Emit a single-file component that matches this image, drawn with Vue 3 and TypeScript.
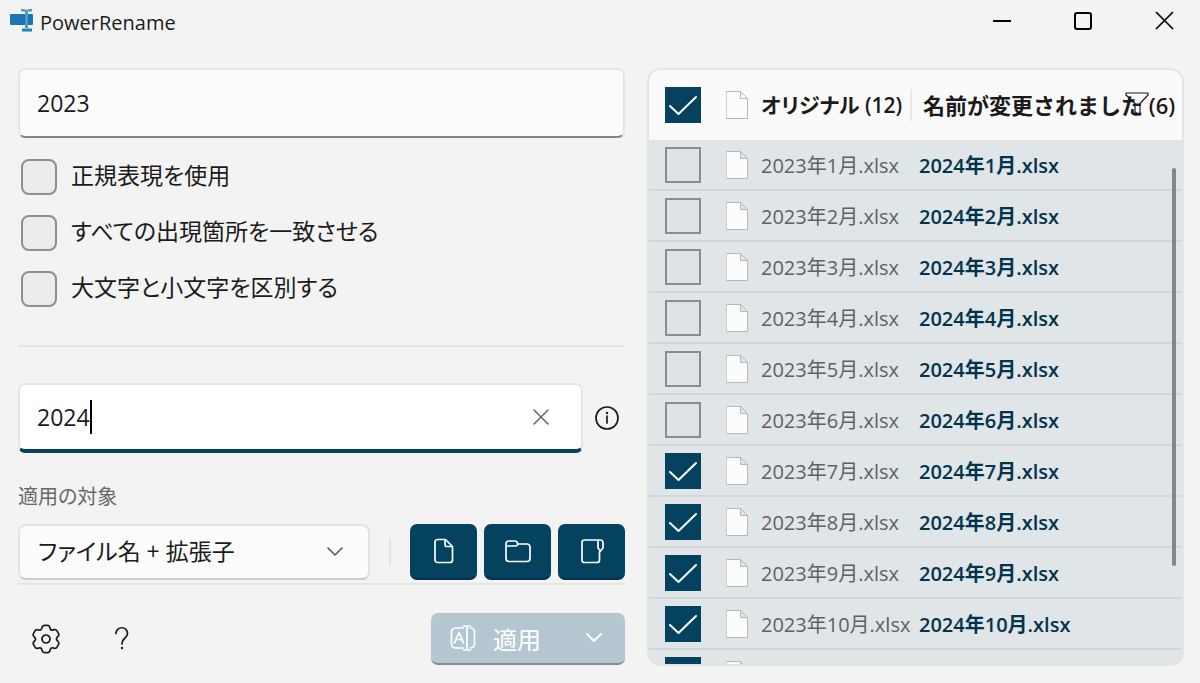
<script setup lang="ts">
import { computed, reactive, ref } from 'vue'

interface FileRow {
  month: number
  checked: boolean
}

const search = ref('2023')
const replace = ref('2024')
const scope = ref('name-ext')
const allChecked = ref(true)

const options = reactive([
  { id: 'regex', label: '正規表現を使用', on: false },
  { id: 'all', label: 'すべての出現箇所を一致させる', on: false },
  { id: 'case', label: '大文字と小文字を区別する', on: false },
])

const rows = reactive<FileRow[]>(
  Array.from({ length: 11 }, (_, i) => ({ month: i + 1, checked: i >= 6 })),
)

const replaceWidth = computed(() => ({ width: `${Math.max(replace.value.length, 1)}ch` }))

// Six-toothed gear outline with rounded corners, centred on the origin.
const gearPath = (() => {
  const base: [number, number][] = [[-3.2, -13.6], [3.2, -13.6], [4.8, -8.6]]
  const pts: [number, number][] = []
  for (let k = 0; k < 6; k++) {
    const a = (k * Math.PI) / 3
    for (const [x, y] of base) {
      pts.push([x * Math.cos(a) - y * Math.sin(a), x * Math.sin(a) + y * Math.cos(a)])
    }
  }
  const n = pts.length
  const toward = (p: [number, number], q: [number, number], d: number) => {
    const len = Math.hypot(q[0] - p[0], q[1] - p[1])
    return `${(p[0] + ((q[0] - p[0]) * d) / len).toFixed(2)} ${(p[1] + ((q[1] - p[1]) * d) / len).toFixed(2)}`
  }
  return (
    pts
      .map((p, i) => {
        const before = toward(p, pts[(i + n - 1) % n], 1.6)
        const after = toward(p, pts[(i + 1) % n], 1.6)
        return `${i ? 'L' : 'M'}${before}Q${p[0].toFixed(2)} ${p[1].toFixed(2)} ${after}`
      })
      .join('') + 'Z'
  )
})()
</script>

<template>
  <div class="window">
    <header class="titlebar">
      <svg class="app-icon" width="24" height="24" viewBox="0 0 24 24" aria-hidden="true">
        <rect x="0" y="6" width="23" height="11" rx="1" fill="#1b76b3" />
        <path d="M11 1h3l2.500 1 2.500-1h3v2.500h-4v16.500h-3V3.500h-4z" fill="#4f9cc3" />
        <path d="M12 20.500h10v3H12z" fill="#1f86b8" />
      </svg>
      <h1>PowerRename</h1>
      <div class="window-buttons">
        <button type="button" aria-label="最小化">
          <svg width="20" height="20" viewBox="0 0 20 20"><path d="M1 10h18" /></svg>
        </button>
        <button type="button" aria-label="最大化">
          <svg width="20" height="20" viewBox="0 0 20 20"><rect x="2" y="2" width="16" height="16" rx="2" /></svg>
        </button>
        <button type="button" aria-label="閉じる">
          <svg width="20" height="20" viewBox="0 0 20 20"><path class="thin" d="M2 1l17 17M19 1L2 18" /></svg>
        </button>
      </div>
    </header>

    <main class="content">
      <section class="settings">
        <input v-model="search" class="field search" type="text" aria-label="検索" />

        <div class="options">
          <label v-for="o in options" :key="o.id" class="option">
            <input v-model="o.on" type="checkbox" class="soft-box" />
            <span>{{ o.label }}</span>
          </label>
        </div>

        <hr />

        <div class="replace-row">
          <div class="field active">
            <input v-model="replace" class="replace" type="text" aria-label="置換" :style="replaceWidth" />
            <span class="caret"></span>
            <button class="clear" type="button" aria-label="クリア">
              <svg width="16" height="16" viewBox="0 0 16 16"><path d="M1 1l14 14M15 1L1 15" /></svg>
            </button>
          </div>
          <button class="info" type="button" aria-label="情報">
            <svg width="26" height="26" viewBox="0 0 26 26">
              <circle cx="13" cy="13" r="11" />
              <path d="M13 11v7" />
              <circle class="dot" cx="13" cy="8" r="1.200" />
            </svg>
          </button>
        </div>

        <label class="scope-label" for="scope">適用の対象</label>
        <div class="scope-row">
          <div class="select-wrap">
            <select id="scope" v-model="scope">
              <option value="name-ext">ファイル名 + 拡張子</option>
            </select>
            <svg class="chevron" width="16" height="10" viewBox="0 0 16 10"><path d="M1 1l7 7 7-7" /></svg>
          </div>
          <span class="v-rule"></span>
          <div class="toggles">
            <button type="button" aria-label="ファイルを含める">
              <svg width="28" height="28" viewBox="0 0 28 28">
                <path d="M7.500 2.500h8l7 7V23a2.500 2.500 0 0 1-2.500 2.500H7.500A2.500 2.500 0 0 1 5 23V5a2.500 2.500 0 0 1 2.500-2.500M15 2.500V7.500a2 2 0 0 0 2 2h5.500" />
              </svg>
            </button>
            <button type="button" aria-label="フォルダーを含める">
              <svg width="28" height="28" viewBox="0 0 28 28">
                <path d="M2 8V21.500a3 3 0 0 0 3 3H23a3 3 0 0 0 3-3V10a3 3 0 0 0-3-3H14L12.500 4.500Q12 4 11 4H4.500A2.500 2.500 0 0 0 2 6.500V9H11.500Q12.500 9 13 8.500L14 7" />
              </svg>
            </button>
            <button type="button" aria-label="サブフォルダーを含める">
              <svg width="28" height="28" viewBox="0 0 28 28">
                <path d="M20 3H6.500A2.500 2.500 0 0 0 4 5.500V23a2.500 2.500 0 0 0 2.500 2.500H19a2.500 2.500 0 0 0 2.500-2.500V14.500M22.500 3H20V11l2.500 3 2.500-3V5.500A2.500 2.500 0 0 0 22.500 3z" />
              </svg>
            </button>
          </div>
        </div>

        <footer class="footer">
          <button class="icon-button" type="button" aria-label="設定">
            <svg width="32" height="32" viewBox="-16 -16 32 32">
              <path :d="gearPath" />
              <circle r="4" />
            </svg>
          </button>
          <button class="icon-button" type="button" aria-label="ヘルプ">
            <svg width="32" height="32" viewBox="0 0 32 32">
              <path d="M10 10.500a5.700 5.700 0 0 1 11.500 0c0 4.500-5.500 5-5.500 9.500v1" />
              <circle class="dot" cx="16" cy="25" r="1.200" />
            </svg>
          </button>
          <div class="apply">
            <button class="apply-main" type="button">
              <svg width="28" height="28" viewBox="0 0 28 28">
                <path d="M14 4H6.500A4 4 0 0 0 2.500 8V20A4 4 0 0 0 6.500 24H14M21.500 4A4 4 0 0 1 25.500 8V20A4 4 0 0 1 21.500 24" />
                <path d="M5.500 19L10 8.500 14.500 19M7.500 15.500h5M18 2V26M14.500 2h7M14.500 26h7" />
              </svg>
              <span>適用</span>
            </button>
            <button class="apply-more" type="button" aria-label="その他">
              <svg width="16" height="10" viewBox="0 0 16 10"><path d="M1 1l7 7 7-7" /></svg>
            </button>
          </div>
        </footer>
      </section>

      <section class="panel">
        <table>
          <colgroup>
            <col class="c-check" />
            <col class="c-icon" />
            <col class="c-name" />
            <col />
          </colgroup>
          <thead>
            <tr>
              <th>
                <label class="tick">
                  <input v-model="allChecked" type="checkbox" aria-label="すべて選択" />
                  <svg v-if="allChecked" width="36" height="36" viewBox="0 0 36 36"><path d="M5 19l8.500 8L31 10" /></svg>
                </label>
              </th>
              <th>
                <svg class="doc" width="22" height="28" viewBox="0 0 22 28">
                  <path d="M.5.5H14.500L21.500 7.500V27.500H.5zM14.500.5V7.500H21.500" />
                </svg>
              </th>
              <th class="original"><span>オリジナル (12)</span></th>
              <th class="renamed">名前が変更されました (6)</th>
            </tr>
          </thead>
          <tbody>
            <tr v-for="r in rows" :key="r.month">
              <td>
                <label class="tick">
                  <input v-model="r.checked" type="checkbox" :aria-label="`2023年${r.month}月.xlsx`" />
                  <svg v-if="r.checked" width="36" height="36" viewBox="0 0 36 36"><path d="M5 19l8.500 8L31 10" /></svg>
                </label>
              </td>
              <td>
                <svg class="doc" width="22" height="28" viewBox="0 0 22 28">
                  <path d="M.5.5H14.500L21.500 7.500V27.500H.5zM14.500.5V7.500H21.500" />
                </svg>
              </td>
              <td class="original">2023年{{ r.month }}月.xlsx</td>
              <td class="renamed">2024年{{ r.month }}月.xlsx</td>
            </tr>
          </tbody>
        </table>
        <button class="filter" type="button" aria-label="フィルター">
          <svg width="24" height="24" viewBox="0 0 24 24"><path d="M1 1H23V3L15 11.500V23L10 20V11.500L1 3z" /></svg>
        </button>
        <span class="scrollbar"></span>
      </section>
    </main>
  </div>
</template>

<style>
body {
  margin: 0;
  background: #f3f3f3;
}
</style>

<style scoped>
.window {
  display: flex;
  flex-direction: column;
  box-sizing: border-box;
  height: 100vh;
  overflow: hidden;
  background: #f3f3f3;
  color: #1b1b1b;
  font-family: "Open Sans", "Noto Sans CJK JP", sans-serif;
  font-size: 23px;
  font-feature-settings: "palt";
}
.window * {
  box-sizing: border-box;
}
button,
input,
select {
  margin: 0;
  padding: 0;
  border: 0;
  background: none;
  color: inherit;
  font: inherit;
  font-feature-settings: inherit;
  outline: none;
}
button {
  display: grid;
  place-items: center;
}
svg {
  display: block;
  fill: none;
  stroke: currentColor;
  stroke-width: 2;
  stroke-linecap: round;
  stroke-linejoin: round;
}
svg .dot {
  fill: currentColor;
  stroke: none;
}

.titlebar {
  display: flex;
  align-items: center;
  flex: none;
  height: 44px;
  padding-left: 10px;
}
.app-icon {
  stroke: none;
  margin-bottom: 4px;
}
.titlebar h1 {
  margin: 0 auto 0 6px;
  padding-top: 2px;
  font-size: 20px;
  font-weight: 400;
  line-height: 28px;
}
.window-buttons {
  display: flex;
  gap: 9px;
  color: #000;
}
.window-buttons button {
  width: 72px;
  height: 44px;
  padding-bottom: 2px;
}
.window-buttons svg {
  stroke-linecap: butt;
}
.window-buttons .thin {
  stroke-width: 1.700;
}

.content {
  display: grid;
  grid-template-columns: minmax(0, 607fr) minmax(0, 537fr);
  gap: 22px;
  flex: 1;
  min-height: 0;
  padding: 24px 16px 17px 18px;
}
.settings {
  display: flex;
  flex-direction: column;
  min-height: 0;
}
.field {
  width: 100%;
  height: 70px;
  padding: 0 17px;
  border: 2px solid #e5e5e5;
  border-bottom: 2px solid #868686;
  border-radius: 7px;
  background: #fbfbfb;
}
.options {
  display: flex;
  flex-direction: column;
  gap: 20px;
  padding: 21px 3px 0;
}
.option {
  display: flex;
  align-items: center;
  gap: 14px;
  height: 36px;
  line-height: 32px;
}
.option span {
  padding-bottom: 4px;
}
.soft-box {
  appearance: none;
  width: 36px;
  height: 36px;
  border: 2px solid #8e9090;
  border-radius: 8px;
  background: #ececec;
}
hr {
  width: 100%;
  height: 2px;
  margin: 38px 0 36px;
  border: 0;
  background: #e5e5e5;
}
.replace-row {
  display: flex;
  align-items: center;
  gap: 11px;
}
.field.active {
  display: flex;
  align-items: center;
  flex: 1;
  border-bottom: 4px solid #04425f;
  background: #fff;
}
.replace {
  max-width: 85%;
  caret-color: transparent;
}
.caret {
  width: 2px;
  height: 34px;
  background: #000;
}
.clear {
  width: 32px;
  height: 32px;
  margin: 0 7px 0 auto;
  color: #666;
}
.clear svg,
.chevron {
  stroke-width: 1.500;
}
.info {
  width: 26px;
  margin-right: 5px;
}
.info svg {
  stroke-width: 1.700;
}
.scope-label {
  margin-top: 29px;
  color: #686868;
  font-size: 20px;
  line-height: 30px;
}
.scope-row {
  display: flex;
  align-items: center;
  margin-top: 12px;
  padding-bottom: 3px;
  border-bottom: 2px solid #e5e5e5;
}
.select-wrap {
  display: grid;
  align-items: center;
  flex: 1;
}
.select-wrap > * {
  grid-area: 1 / 1;
}
select {
  appearance: none;
  width: 100%;
  height: 56px;
  padding: 0 18px 2px;
  border: 2px solid #e3e3e3;
  border-bottom-color: #c6ced2;
  border-radius: 8px;
  background: #fbfbfb;
}
.chevron {
  justify-self: end;
  margin-right: 27px;
  color: #555;
  pointer-events: none;
}
.v-rule {
  width: 2px;
  height: 28px;
  margin: 0 19px;
  background: #e5e5e5;
}
.toggles {
  display: flex;
  gap: 7px;
}
.toggles button {
  width: 67px;
  height: 56px;
  border-bottom: 2px solid #02304a;
  border-radius: 7px;
  background: #04425f;
  color: #fff;
}
.toggles svg,
.apply-main svg {
  stroke-width: 1.700;
}
.footer {
  display: flex;
  align-items: center;
  margin-top: 28px;
}
.icon-button {
  width: 56px;
  height: 52px;
  margin-right: 20px;
}
.icon-button svg {
  stroke-width: 1.700;
}
.apply {
  display: flex;
  margin-left: auto;
  border-bottom: 2px solid #7f8c93;
  border-radius: 7px;
  background: #b4c7d1;
  color: #fff;
}
.apply button {
  height: 50px;
}
.apply-main {
  grid-auto-flow: column;
  justify-content: start;
  gap: 16px;
  width: 131px;
  padding-left: 18px;
  font-size: 24px;
}
.apply-more {
  width: 63px;
}

.panel {
  position: relative;
  overflow: hidden;
  border: 2px solid #e2e5e6;
  border-radius: 14px;
  background: #e0e5e8;
}
table {
  width: 100%;
  table-layout: fixed;
  border-collapse: separate;
  border-spacing: 0;
  white-space: nowrap;
}
.c-check {
  width: 77px;
}
.c-icon {
  width: 35px;
}
.c-name {
  width: 158px;
}
th,
td {
  padding: 0;
  text-align: left;
  vertical-align: middle;
}
th {
  height: 70px;
  background: #fafafa;
  font-size: 22px;
  font-weight: 600;
  line-height: 32px;
}
td {
  height: 51px;
  border-bottom: 2px solid #d0d7da;
  font-size: 20px;
  line-height: 28px;
}
td.original,
td.renamed {
  padding-top: 3px;
}
td.original {
  color: #5f6163;
}
td.renamed {
  color: #04344d;
  font-weight: 600;
}
th.renamed {
  padding-left: 4px;
  font-feature-settings: normal;
}
th.original span {
  display: block;
  width: 151px;
  border-right: 2px solid #e8e8e8;
  font-size: 21px;
}
.tick {
  display: grid;
  width: 36px;
  height: 36px;
  margin-left: 16px;
}
.tick > * {
  grid-area: 1 / 1;
}
.tick input {
  appearance: none;
  width: 36px;
  height: 36px;
  border: 2px solid #8a8d8f;
  background: #dde2e5;
}
.tick input:checked {
  border-color: #04425f;
  background: #04425f;
}
.tick svg {
  color: #fff;
  pointer-events: none;
}
.doc {
  fill: #fcfcfc;
  stroke: #b5b9bb;
  stroke-width: 1;
}
.filter {
  position: absolute;
  top: 22px;
  right: 33px;
}
.filter svg {
  stroke-width: 1.200;
}
.scrollbar {
  position: absolute;
  top: 98px;
  right: 6px;
  width: 4px;
  height: 67%;
  border-radius: 2px;
  background: #858788;
}
</style>
